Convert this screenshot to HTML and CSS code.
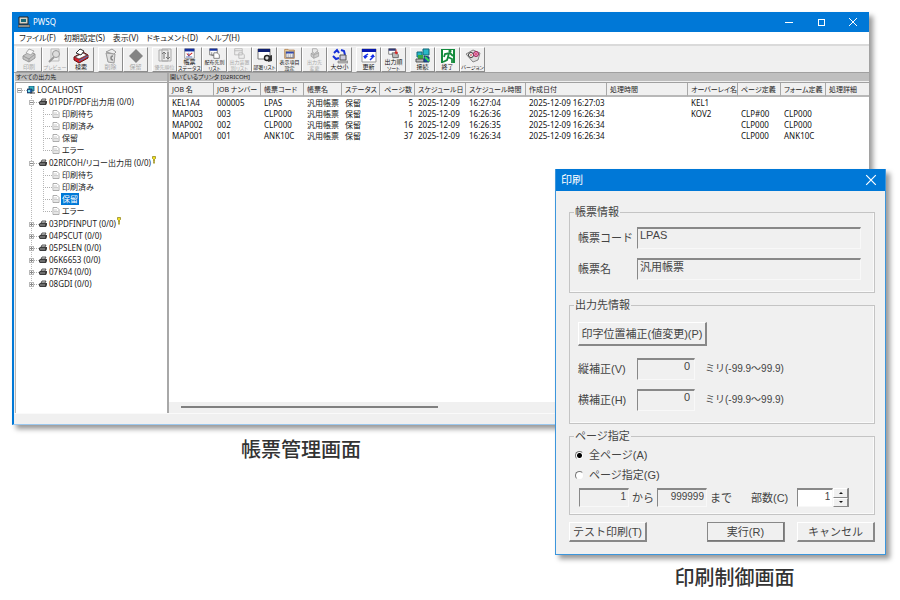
FILE: index.html
```html
<!DOCTYPE html>
<html lang="ja">
<head>
<meta charset="utf-8">
<title>PWSQ</title>
<link rel="stylesheet" href="styles.css">
</head>
<body>
<svg class="sprite" aria-hidden="true">
  <symbol id="i-print" viewBox="0 0 16 16"><path d="M2 8l6-4 6 2v4l-6 4-6-3z" fill="#c4c4c4" stroke="#9a9a9a"/><path d="M5 5l3-4 5 2-3 4z" fill="#f4f4f4" stroke="#aaa"/><path d="M2 8l6 3 6-5M8 11v3" fill="none" stroke="#999"/></symbol>
  <symbol id="i-preview" viewBox="0 0 16 16"><path d="M4 1h8v12H4z" fill="#eee" stroke="#bbb"/><circle cx="9" cy="6" r="3.500" fill="#ddd" stroke="#999"/><path d="M7 9l-5 5" stroke="#999" stroke-width="2"/></symbol>
  <symbol id="i-search" viewBox="0 0 16 16"><path d="M1 9l9-5 5 3v3l-9 5-5-3z" fill="#d4202c" stroke="#611"/><path d="M2 9l8-4 4 2-8 4z" fill="#fff" stroke="#333" stroke-width=".7"/><path d="M3 5l4-4 4 2-3 4z" fill="#fff" stroke="#333"/><path d="M6 13l9-5" stroke="#38c"/></symbol>
  <symbol id="i-delete" viewBox="0 0 16 16"><path d="M3 5l9 1-1 9-6-1z" fill="#ddd" stroke="#999"/><path d="M3 4l6-3 4 3-2 2z" fill="#eee" stroke="#999"/><path d="M10 8a2 2 0 1 0 0 4" fill="none" stroke="#888" stroke-width="1.500"/></symbol>
  <symbol id="i-hold" viewBox="0 0 16 16"><path d="M8 1l7 7-7 7-7-7z" fill="#848484"/></symbol>
  <symbol id="i-order" viewBox="0 0 16 16"><path d="M2 2h9v11H2zM5 1h9v12H5z" fill="#eee" stroke="#aaa"/><path d="M7 11V4M5 6l2-2 2 2M11 4v7M9 9l2 2 2-2" fill="none" stroke="#777"/></symbol>
  <symbol id="i-status" viewBox="0 0 16 16"><path d="M1 1h14v14H1z" fill="#fff" stroke="#777"/><path d="M1 1h14v4H1z" fill="#1530a0"/><path d="M4 8l3 3 5-4" fill="none" stroke="#c22" stroke-width="1.500"/><path d="M7 7v5M3 13h9" stroke="#24a"/></symbol>
  <symbol id="i-dist" viewBox="0 0 16 16"><path d="M1 1h11v9H1z" fill="#fff" stroke="#555"/><path d="M1 1h11v3H1z" fill="#1530a0"/><path d="M7 7h5l3 3v5H7z" fill="#fff" stroke="#555"/><path d="M4 6v5h3" stroke="#666" fill="none"/></symbol>
  <symbol id="i-distoff" viewBox="0 0 16 16"><path d="M1 1h11v9H1zM1 4h11M7 7h5l3 3v5H7z" fill="#eee" stroke="#aaa"/></symbol>
  <symbol id="i-dept" viewBox="0 0 16 16"><path d="M1 1h12v10H1z" fill="#fff" stroke="#777"/><path d="M1 1h12v3H1z" fill="#102070"/><circle cx="10" cy="10" r="2.500" fill="#ddd" stroke="#222" stroke-width="1.400"/><path d="M12 8l3-1v6l-4 1z" fill="#333"/></symbol>
  <symbol id="i-items" viewBox="0 0 16 16"><path d="M1 2h5l1 1h8v12H1z" fill="#ecd5a0" stroke="#a86a30"/><path d="M3 5h11v9H3z" fill="#fff" stroke="#557"/><path d="M3 7h11" stroke="#1530a0" stroke-width="2"/><path d="M6 9v5M9 9v5M12 9v5" stroke="#777"/></symbol>
  <symbol id="i-dest" viewBox="0 0 16 16"><path d="M3 8l8-4 3 3v5l-7 3-4-3z" fill="#ccc" stroke="#999"/><path d="M5 1h6l2 3-5 4-3-2z" fill="#e8e8e8" stroke="#999"/><path d="M3 8l4 2 7-3M7 10v5" fill="none" stroke="#999"/></symbol>
  <symbol id="i-size" viewBox="0 0 16 16"><path d="M2 5l3-3 2 3M13 7l-1-4-3-1" fill="none" stroke="#1530d8" stroke-width="2"/><path d="M8 7h6v5H8z" fill="#ccd" stroke="#555"/><path d="M6 13h10v2H6z" fill="#bbb" stroke="#777" stroke-width=".6"/><path d="M1 8l3 3 3-1" fill="none" stroke="#1530d8" stroke-width="2"/></symbol>
  <symbol id="i-refresh" viewBox="0 0 16 16"><path d="M1 1h14v13H1z" fill="#fff" stroke="#999"/><path d="M1 1h14v3H1z" fill="#0818b0"/><path d="M4 10V8l3-2M12 7v2l-3 3" fill="none" stroke="#1530e8" stroke-width="1.500"/><path d="M2 8h5l-3 3zM9 9h5l-2-3z" fill="#1530e8"/></symbol>
  <symbol id="i-sort" viewBox="0 0 16 16"><path d="M1 1h10v8H1z" fill="#fff" stroke="#555"/><path d="M1 1h10v3H1z" fill="#303878"/><path d="M6 7h7l2 3v4H7z" fill="#bbb" stroke="#444"/><path d="M12 2v5M10 6l2 3 2-3z" fill="#d22" stroke="#d22"/></symbol>
  <symbol id="i-connect" viewBox="0 0 16 16"><path d="M8 1h6v6H8zM2 4h5v5H2z" fill="#28b8c8" stroke="#167"/><path d="M3 7h5v4H3z" fill="#38a840"/><path d="M1 11h8v3H1z" fill="#bbb" stroke="#555"/><path d="M9 8l5 1v5H9z" fill="#2840b0" stroke="#146"/><path d="M10 9l4 4" stroke="#3d5" stroke-width="2"/></symbol>
  <symbol id="i-exit" viewBox="0 0 16 16"><path d="M1 1h14v14H1z" fill="#138a3c"/><path d="M3 2h10v13H3z" fill="#fff"/><circle cx="10" cy="3" r="1.600" fill="#138a3c"/><path d="M13 8l-3-3-5 1-1 3M9 5L8 9l4 2v4M8 9l-1 3-4 2" fill="none" stroke="#138a3c" stroke-width="1.800"/></symbol>
  <symbol id="i-version" viewBox="0 0 16 16"><path d="M1 6l7-4 7 3-2 7-5 2z" fill="#ddd" stroke="#888"/><circle cx="6" cy="7" r="2.500" fill="#fff" stroke="#333"/><circle cx="11" cy="6" r="2.500" fill="#e9c" stroke="#925"/><path d="M5 7h2M10 6h2" stroke="#c23"/></symbol>
  <symbol id="i-host" viewBox="0 0 8 8"><path d="M2 0h5v5H2z" fill="#38b0c0" stroke="#124c70" stroke-width=".8"/><path d="M0 3h5v4H0z" fill="#2464b0" stroke="#123" stroke-width=".6"/><path d="M1 4h2v2H1z" fill="#7ee0e8"/><path d="M3 7h5" stroke="#444"/></symbol>
  <symbol id="i-printer" viewBox="0 0 8 8"><path d="M3 1h4L6 3H2z" fill="#ddd" stroke="#333" stroke-width=".8"/><path d="M0 4l1-1h7v2L7 7H1L0 6z" fill="#3c3c3c"/><path d="M1 5h5" stroke="#ccc" stroke-width=".7"/></symbol>
  <symbol id="i-doc" viewBox="0 0 8 8"><path d="M1 .5h4l2 2v5H1z" fill="#fff" stroke="#999" stroke-width=".8"/><path d="M2 3h3M2 4.500h4M2 6h4" stroke="#aaa" stroke-width=".6"/></symbol>
  <symbol id="i-alert" viewBox="0 0 4 8"><path d="M.5 .5h3v2l-1 1v2h-1v-2l-1-1z" fill="#f0e020" stroke="#776a00" stroke-width=".6"/><path d="M2 6v1.500" stroke="#998a00" stroke-width="1.500"/></symbol>
  <symbol id="i-close" viewBox="0 0 10 10"><path d="M1 1l8 8M9 1l-8 8" stroke="#fff" fill="none"/></symbol>
</svg>

<main class="desktop">
  <figure class="manager">
    <section class="window" aria-label="PWSQ">
      <header class="titlebar">
        <svg class="app-icon" viewBox="0 0 12 12"><path d="M1 1h9v7H1z" fill="#d8d4c8" stroke="#222"/><path d="M3 3h5v3H3z" fill="#186878"/><path d="M0 9h12v2H0z" fill="#d8d4c8" stroke="#222" stroke-width=".8"/></svg>
        <span class="title">PWSQ</span>
        <button class="win-btn" aria-label="最小化"><svg viewBox="0 0 10 10"><path d="M1 5.500h8" stroke="#fff"/></svg></button>
        <button class="win-btn" aria-label="最大化"><svg viewBox="0 0 10 10"><rect x="2.500" y="2.500" width="6" height="6" fill="none" stroke="#fff"/></svg></button>
        <button class="win-btn" aria-label="閉じる"><svg><use href="#i-close"/></svg></button>
      </header>
      <nav class="menubar">
        <a href="#">ファイル(F)</a><a href="#">初期設定(S)</a><a href="#">表示(V)</a><a href="#">ドキュメント(D)</a><a href="#">ヘルプ(H)</a>
      </nav>
      <div class="toolbar">
        <div class="tools wide">
          <button class="tool off"><svg><use href="#i-print"/></svg>印刷</button>
          <button class="tool off"><svg><use href="#i-preview"/></svg><small>プレビュー</small></button>
          <button class="tool"><svg><use href="#i-search"/></svg>検索</button>
        </div>
        <div class="tools">
          <button class="tool off"><svg><use href="#i-delete"/></svg>削除</button>
          <button class="tool off"><svg><use href="#i-hold"/></svg>保留</button>
        </div>
        <div class="tools">
          <button class="tool off"><svg><use href="#i-order"/></svg><small>優先順位</small></button>
          <button class="tool two"><svg><use href="#i-status"/></svg><span>帳票</span><small>ステータス</small></button>
          <button class="tool two"><svg><use href="#i-dist"/></svg><small>配布先別</small><small>リスト</small></button>
          <button class="tool two off"><svg><use href="#i-distoff"/></svg><small>出力装置</small><small>別リスト</small></button>
          <button class="tool"><svg><use href="#i-dept"/></svg><small>部署リスト</small></button>
          <button class="tool two"><svg><use href="#i-items"/></svg><small>表示項目</small><small>設定</small></button>
          <button class="tool two off"><svg><use href="#i-dest"/></svg><small>出力先</small><small>変更</small></button>
          <button class="tool"><svg><use href="#i-size"/></svg>大⇔小</button>
        </div>
        <div class="tools">
          <button class="tool"><svg><use href="#i-refresh"/></svg>更新</button>
          <button class="tool two"><svg><use href="#i-sort"/></svg><span>出力順</span><small>ソート</small></button>
        </div>
        <div class="tools">
          <button class="tool"><svg><use href="#i-connect"/></svg>接続</button>
          <button class="tool"><svg><use href="#i-exit"/></svg>終了</button>
          <button class="tool"><svg><use href="#i-version"/></svg><small>バージョン</small></button>
        </div>
      </div>
      <div class="workspace">
        <section class="side">
          <h2 class="pane-title">すべての出力先</h2>
          <div class="tree">
            <div class="node"><i class="box"></i><i class="dots"></i><svg><use href="#i-host"/></svg>LOCALHOST</div>
            <ul class="printers">
              <li class="open">
                <div class="node"><i class="box"></i><i class="dots"></i><svg><use href="#i-printer"/></svg>01PDF/PDF出力用 (0/0)</div>
                <ul class="queues">
                  <li class="node"><i class="dots"></i><svg><use href="#i-doc"/></svg>印刷待ち</li>
                  <li class="node"><i class="dots"></i><svg><use href="#i-doc"/></svg>印刷済み</li>
                  <li class="node"><i class="dots"></i><svg><use href="#i-doc"/></svg>保留</li>
                  <li class="node"><i class="dots"></i><svg><use href="#i-doc"/></svg>エラー</li>
                </ul>
              </li>
              <li class="open">
                <div class="node"><i class="box"></i><i class="dots"></i><svg><use href="#i-printer"/></svg>02RICOH/リコー出力用 (0/0)<svg class="alert"><use href="#i-alert"/></svg></div>
                <ul class="queues">
                  <li class="node"><i class="dots"></i><svg><use href="#i-doc"/></svg>印刷待ち</li>
                  <li class="node"><i class="dots"></i><svg><use href="#i-doc"/></svg>印刷済み</li>
                  <li class="node"><i class="dots"></i><svg><use href="#i-doc"/></svg><span class="selected">保留</span></li>
                  <li class="node"><i class="dots"></i><svg><use href="#i-doc"/></svg>エラー</li>
                </ul>
              </li>
              <li class="node"><i class="box plus"></i><i class="dots"></i><svg><use href="#i-printer"/></svg>03PDFINPUT (0/0)<svg class="alert"><use href="#i-alert"/></svg></li>
              <li class="node"><i class="box plus"></i><i class="dots"></i><svg><use href="#i-printer"/></svg>04PSCUT (0/0)</li>
              <li class="node"><i class="box plus"></i><i class="dots"></i><svg><use href="#i-printer"/></svg>05PSLEN (0/0)</li>
              <li class="node"><i class="box plus"></i><i class="dots"></i><svg><use href="#i-printer"/></svg>06K6653 (0/0)</li>
              <li class="node"><i class="box plus"></i><i class="dots"></i><svg><use href="#i-printer"/></svg>07K94 (0/0)</li>
              <li class="node"><i class="box plus"></i><i class="dots"></i><svg><use href="#i-printer"/></svg>08GDI (0/0)</li>
            </ul>
          </div>
        </section>
        <section class="jobs">
          <h2 class="pane-title">開いているプリンタ [02RICOH]</h2>
          <div class="job-list">
            <table>
              <colgroup><col class="w-job"><col class="w-num"><col class="w-code"><col class="w-name"><col class="w-name"><col class="w-pages"><col class="w-date"><col class="w-time"><col class="w-stamp"><col class="w-stamp"><col class="w-over"><col class="w-code"><col class="w-form"><col></colgroup>
              <thead><tr><th>JOB 名</th><th>JOB ナンバー</th><th>帳票コード</th><th>帳票名</th><th>ステータス</th><th class="num">ページ数</th><th>スケジュール日</th><th>スケジュール時間</th><th>作成日付</th><th>処理時間</th><th>オーバーレイ名</th><th>ページ定義</th><th>フォーム定義</th><th>処理詳細</th></tr></thead>
              <tbody>
                <tr><td>KEL1A4</td><td>000005</td><td>LPAS</td><td>汎用帳票</td><td>保留</td><td class="num">5</td><td>2025-12-09</td><td>16:27:04</td><td>2025-12-09 16:27:03</td><td></td><td>KEL1</td><td></td><td></td><td></td></tr>
                <tr><td>MAP003</td><td>003</td><td>CLP000</td><td>汎用帳票</td><td>保留</td><td class="num">1</td><td>2025-12-09</td><td>16:26:36</td><td>2025-12-09 16:26:34</td><td></td><td>KOV2</td><td>CLP#00</td><td>CLP000</td><td></td></tr>
                <tr><td>MAP002</td><td>002</td><td>CLP000</td><td>汎用帳票</td><td>保留</td><td class="num">16</td><td>2025-12-09</td><td>16:26:35</td><td>2025-12-09 16:26:34</td><td></td><td></td><td>CLP000</td><td>CLP000</td><td></td></tr>
                <tr><td>MAP001</td><td>001</td><td>ANK10C</td><td>汎用帳票</td><td>保留</td><td class="num">37</td><td>2025-12-09</td><td>16:26:34</td><td>2025-12-09 16:26:34</td><td></td><td></td><td>CLP000</td><td>ANK10C</td><td></td></tr>
              </tbody>
            </table>
            <div class="scrollbar"><div class="thumb"></div></div>
          </div>
        </section>
      </div>
      <footer class="statusbar"></footer>
    </section>
    <figcaption>帳票管理画面</figcaption>
  </figure>

  <figure class="printing">
    <form class="dialog" aria-label="印刷">
      <header class="titlebar">
        <span class="title">印刷</span>
        <button type="button" class="win-btn" aria-label="閉じる"><svg><use href="#i-close"/></svg></button>
      </header>
      <div class="dialog-body">
        <fieldset class="report">
          <legend>帳票情報</legend>
          <div class="row"><label for="code">帳票コード</label><input id="code" class="fill" value="LPAS" readonly></div>
          <div class="row"><label for="name">帳票名</label><input id="name" class="fill" value="汎用帳票" readonly></div>
        </fieldset>
        <fieldset class="output">
          <legend>出力先情報</legend>
          <button type="button" class="push adjust">印字位置補正(値変更)(P)</button>
          <div class="row"><label for="vert">縦補正(V)</label><input id="vert" class="offset" value="0" readonly><span class="unit">ミリ(-99.9～99.9)</span></div>
          <div class="row"><label for="horz">横補正(H)</label><input id="horz" class="offset" value="0" readonly><span class="unit">ミリ(-99.9～99.9)</span></div>
        </fieldset>
        <fieldset class="pages">
          <legend>ページ指定</legend>
          <label class="choice"><input type="radio" name="range" checked>全ページ(A)</label>
          <label class="choice"><input type="radio" name="range">ページ指定(G)</label>
          <div class="range">
            <input class="page" aria-label="開始ページ" value="1" readonly><span>から</span><input class="page" aria-label="終了ページ" value="999999" readonly><span>まで</span>
            <label class="copies-label" for="copies">部数(C)</label>
            <div class="spinner"><input id="copies" value="1"><div class="steps"><button type="button" class="up" aria-label="増やす"></button><button type="button" class="down" aria-label="減らす"></button></div></div>
          </div>
        </fieldset>
        <div class="actions">
          <button type="button" class="push">テスト印刷(T)</button>
          <button type="button" class="push default">実行(R)</button>
          <button type="button" class="push">キャンセル</button>
        </div>
      </div>
    </form>
    <figcaption>印刷制御画面</figcaption>
  </figure>
</main>
</body>
</html>
```
FILE: styles.css
```css
* { box-sizing: border-box; }
body { margin: 0; background: #fff; color: #222; font: 8px/12px "Noto Sans", "Noto Sans CJK JP", sans-serif; font-feature-settings: "palt"; }
figure, h2, ul { margin: 0; padding: 0; }
ul { list-style: none; }
button, input, legend { font: inherit; color: inherit; margin: 0; padding: 0; font-feature-settings: inherit; }
a { color: inherit; text-decoration: none; }
.sprite { display: none; }
.desktop { position: relative; min-height: 100vh; padding: 12px 31px 0 12px; overflow: hidden; }
figcaption { font: 500 20px/24px "Noto Sans CJK JP", sans-serif; color: #333; font-feature-settings: normal; }

/* window frames */
.window { border-left: 2px solid #0078d7; border-bottom: 1px solid #9cc8ee; box-shadow: 4px 4px 5px rgba(0,0,0,.4); background: #fff; }
.titlebar { display: flex; align-items: center; height: 20px; background: #0078d7; color: #fff; }
.titlebar .title { flex: 1; }
.app-icon { width: 12px; height: 12px; margin: 0 3px 0 4px; }
.win-btn { display: flex; align-items: center; justify-content: center; width: 32px; height: 20px; border: 0; background: none; }
.win-btn svg { width: 10px; height: 10px; }
.manager figcaption { padding: 12px 0 0 229px; }

.menubar { display: flex; gap: 8px; padding: 0 5px; height: 12px; white-space: nowrap; }
.toolbar { display: flex; gap: 4px; padding: 1px 2px; height: 29px; border-top: 2px solid #dadada; border-bottom: 1px solid #a0a0a0; background: #f0f0f0; }
.tools { display: flex; }
.tool { display: flex; flex-direction: column; align-items: center; justify-content: space-between; width: 25px; height: 25px; border: 1px solid; border-color: #fff #8c8c8c #8c8c8c #fff; background: #f0f0f0; font-size: 6px; line-height: 7px; white-space: nowrap; color: #111; }
.wide .tool { width: 26px; }
.tool svg { flex: none; width: 16px; height: 16px; }
.tool small { font-size: 5px; }
.tool.two { line-height: 6px; }
.tool.two svg { width: 11px; height: 11px; }
.tool.off { color: #a8a8a8; }

.workspace { display: flex; min-height: 340px; }
.side { display: flex; flex-direction: column; width: 155px; padding-left: 1px; border-right: 2px solid #a8a8a8; background: #f0f0f0; }
.jobs { flex: 1; display: flex; flex-direction: column; min-width: 0; background: #f0f0f0; }
.pane-title { height: 8px; margin-bottom: 1px; padding-left: 1px; background: #bfbfbf; font-size: 6px; line-height: 8px; font-weight: 400; }
.tree { flex: 1; padding: 1px; border-left: 1px solid #b8b8b8; border-top: 1px solid #a0a0a0; background: #fff; }
.node { display: flex; align-items: center; height: 12px; white-space: nowrap; }
.node svg { flex: none; width: 8px; height: 8px; margin-right: 2px; }
.node .alert { width: 4px; margin: 0 0 6px 1px; }
.box { width: 5px; height: 5px; border: 1px solid #b8b8b8; background: linear-gradient(#888, #888) center / 3px 1px no-repeat #fff; }
.plus { background: linear-gradient(#888, #888) center / 3px 1px no-repeat, linear-gradient(#888, #888) center / 1px 3px no-repeat #fff; }
.dots { width: 5px; border-top: 1px dotted #b0b0b0; }
.printers { padding-left: 12px; background: repeating-linear-gradient(#b8b8b8 0 1px, #fff 1px 2px) 14px 0 / 1px 100% no-repeat; }
.open { margin-bottom: 1px; }
.queues { margin-left: 14px; background: repeating-linear-gradient(#b8b8b8 0 1px, #fff 1px 2px) 0 0 / 1px 42px no-repeat; }
.queues .dots { width: 9px; }
.selected { margin-left: -1px; padding: 0 1px; background: #0078d7; color: #fff; }

.job-list { flex: 1; display: flex; flex-direction: column; border-top: 1px solid #a0a0a0; background: #fff; }
table { width: 100%; table-layout: fixed; border-spacing: 0; white-space: nowrap; }
th, td { padding: 0 0 0 3px; text-align: left; font-weight: 400; line-height: 11px; height: 11px; }
th { height: 14px; border-right: 1px solid #a8a8a8; border-bottom: 2px solid #b8b8b8; background: #f0f0f0; font-size: 7px; }
th:last-child { border-right: 0; }
tbody { color: #111; }
th.num, td.num { text-align: right; padding-right: 2px; }
.w-job { width: 45px; }
.w-num { width: 47px; }
.w-code { width: 43px; }
.w-name { width: 38px; }
.w-pages { width: 35px; }
.w-date { width: 51px; }
.w-time { width: 60px; }
.w-stamp { width: 81px; }
.w-over { width: 50px; }
.w-form { width: 45px; }
.scrollbar { margin-top: auto; padding: 4px 12px; height: 11px; background: #f0f0f0; }
.thumb { width: 38%; height: 2px; background: #808080; }
.statusbar { height: 11px; border-top: 1px solid #fafafa; background: #f0f0f0; }

/* print dialog */
.printing { position: absolute; right: 14px; top: 169px; width: 331px; }
.printing figcaption { padding: 10px 0 0 28px; text-align: center; }
.dialog { border: 1px solid #3c96dc; border-top: 0; background: #f0f0f0; box-shadow: 4px 4px 5px rgba(0,0,0,.4); font: 11px/14px "Liberation Sans", "Noto Sans CJK JP", sans-serif; color: #444; }
.dialog .titlebar { height: 22px; padding-left: 5px; }
.dialog .win-btn { width: 29px; }
.dialog .win-btn svg { width: 12px; height: 12px; }
.dialog-body { display: flex; flex-direction: column; gap: 5px; padding: 14px 10px 12px 13px; }
fieldset { min-width: 0; margin: 0; padding: 0 13px 0 8px; border: 1px solid #c4c4c4; box-shadow: inset -1px -1px #fafafa; }
legend { margin-left: -4px; padding: 0 1px; }
.row { display: flex; align-items: center; height: 22px; margin-bottom: 9px; }
.row label { width: 59px; }
.dialog input:not([type]) { min-width: 0; height: 22px; padding: 0 4px 8px 2px; border: 1px solid; border-color: #888 #f8f8f8 #f8f8f8 #888; border-top-width: 2px; border-radius: 0; background: #f0f0f0; line-height: 12px; outline: 0; }
.dialog .fill { flex: 1; }
.report { padding-top: 8px; padding-bottom: 3px; }
.output { padding-top: 10px; padding-bottom: 3px; }
.dialog .offset { width: 58px; text-align: right; }
.unit { margin-left: 10px; font-size: 10px; }
.push { height: 20px; width: 78px; border: 1px solid; border-color: #fff #888 #888 #fff; border-right-width: 2px; border-bottom-width: 2px; background: #f0f0f0; white-space: nowrap; line-height: 14px; }
.adjust { display: block; width: 129px; height: 24px; margin-bottom: 12px; }
.pages { padding-left: 5px; padding-bottom: 7px; }
.pages legend { margin-left: -1px; }
.choice { display: flex; align-items: center; gap: 5px; height: 20px; }
.choice:first-of-type { margin-top: 2px; }
input[type=radio] { appearance: none; width: 9px; height: 9px; border: 1px solid; border-color: #777 #eee #eee #777; border-radius: 50%; background: #fff; }
input[type=radio]:checked { background: radial-gradient(#000 0 2px, #fff 3px); }
.range { display: flex; align-items: center; gap: 3px; padding-left: 4px; margin-top: 3px; }
.dialog .range input { width: 50px; height: 19px; padding: 0 2px 4px; text-align: right; font-size: 10px; }
.copies-label { margin: 0 6px 0 16px; }
.spinner { display: flex; width: 52px; height: 19px; border-right: 1px solid #888; }
.dialog .spinner input { flex: 1; background: #fff; }
.steps { display: flex; flex-direction: column; width: 15px; }
.steps button { display: flex; flex: 1; align-items: center; justify-content: center; border: 1px solid; border-color: #fff #888 #888 #fff; background: #f0f0f0; }
.steps button::before { content: ""; border: 2px solid transparent; }
.steps .up::before { border-bottom-color: #111; border-top: 0; }
.steps .down::before { border-top-color: #111; border-bottom: 0; }
.actions { display: flex; margin-top: 2px; gap: 12px; }
.actions .default { margin-left: auto; border-color: #777; outline: 1px solid #888; outline-offset: -1px; }
```
